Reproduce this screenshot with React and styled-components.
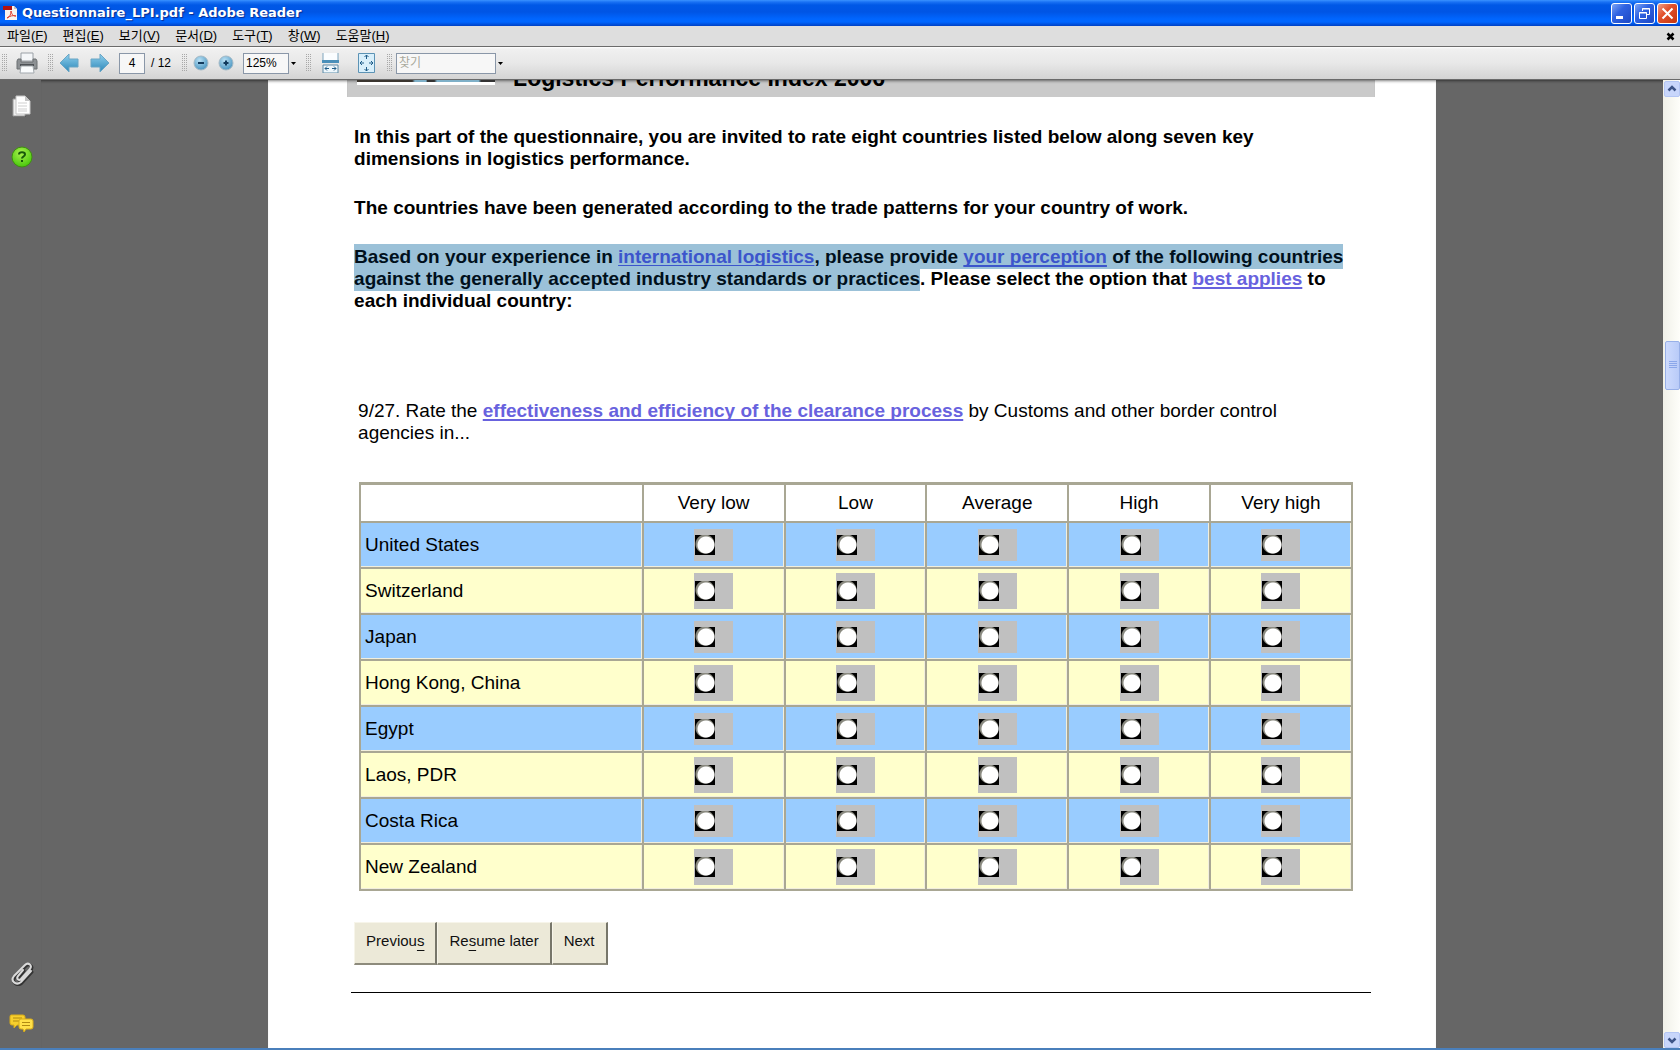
import React from 'react';
import styled, { createGlobalStyle } from 'styled-components';

const uiFont = `'Liberation Sans', 'Noto Sans CJK KR', sans-serif`;
const docFont = `'Liberation Sans', sans-serif`;

const GlobalStyle = createGlobalStyle`
    * {
        box-sizing: border-box;
    }
    body {
        margin: 0;
        overflow: hidden;
        background: #666666;
    }
`
const Window = styled.div`
    display: flex;
    flex-direction: column;
    height: 100vh;
    border-bottom: 2px solid #4a7fbb;
    font-family: ${uiFont};
    font-size: 12px;
    color: #000000;
`
const TitleBar = styled.header`
    display: flex;
    flex: none;
    align-items: center;
    height: 26px;
    padding: 0 2px 0 3px;
    background: linear-gradient(#3a93ff 0, #1a72f4 2px, #0058e6 5px, #0055e5 12px, #0066ff 19px, #0066ff 22px, #0041c4 26px);
`
const Title = styled.h1`
    flex: 1;
    margin: 0 0 0 4px;
    font-family: 'DejaVu Sans', sans-serif;
    font-size: 13px;
    font-weight: bold;
    line-height: 24px;
    color: #ffffff;
    text-shadow: 1px 1px 1px #0a2a8c;
`
const WindowButton = styled.button`
    display: flex;
    width: 21px;
    height: 21px;
    margin-left: 2px;
    padding: 0;
    border: 1px solid #ffffff;
    border-radius: 3px;
    background: ${({ $close }) => ($close
        ? 'linear-gradient(135deg, #f0a088, #e2512c 40%, #c5350e)'
        : 'linear-gradient(135deg, #7da5f5, #2f63e2 40%, #1d48c4)')};
`
const MenuBar = styled.nav`
    display: flex;
    flex: none;
    align-items: center;
    height: 20px;
    padding: 0 5px 0 7px;
    background: #dedede;
`
const MenuItem = styled.button`
    margin-right: 15px;
    padding: 0;
    border: none;
    background: none;
    font: 13px/18px ${uiFont};
    color: #000000;
`
const CloseDocument = styled.button`
    display: flex;
    margin-left: auto;
    padding: 0;
    border: none;
    background: none;
`
const ToolBar = styled.div`
    display: flex;
    flex: none;
    align-items: center;
    height: 34px;
    border-top: 1px solid #6b6b6b;
    border-bottom: 1px solid #6b6b6b;
    background: linear-gradient(#ffffff 0, #f0f0f0 2px, #e8e8e8 50%, #d4d4d4);
`
const Grip = styled.span`
    width: 5px;
    height: 18px;
    margin: 0 ${({ $after }) => $after}px 0 ${({ $before }) => $before}px;
    background: repeating-linear-gradient(#a8a8a8 0 1px, transparent 1px 2px);
    -webkit-mask: repeating-linear-gradient(90deg, #000 0 1px, transparent 1px 2px);
`
const ToolButton = styled.button`
    display: flex;
    margin-right: ${({ $gap }) => $gap}px;
    padding: 0;
    border: none;
    background: none;
`
const ToolInput = styled.input`
    width: ${({ $width }) => $width}px;
    height: 21px;
    padding: 0 2px;
    border: 1px solid #8a97a8;
    background: #f7f7f7;
    font: 12px ${uiFont};
    text-align: ${({ $align }) => $align || 'left'};
    color: #000000;

    &::placeholder {
        color: #a9a99c;
        opacity: 1;
    }
`
const PageCount = styled.span`
    margin: 0 11px 0 6px;
`
const DropButton = styled.button`
    display: flex;
    padding: 0 2px;
    border: none;
    background: none;
`
const Workspace = styled.div`
    display: flex;
    flex: 1;
    min-height: 0;
    background: #666666;
`
const Sidebar = styled.aside`
    display: flex;
    flex: none;
    flex-direction: column;
    align-items: center;
    gap: 28px;
    width: 41px;
    padding: 15px 0 15px 2px;
`
const SidebarButton = styled.button`
    display: flex;
    padding: 0;
    border: none;
    background: none;
`
const Spacer = styled.div`
    flex: 1;
`
const Viewer = styled.main`
    flex: 1;
    min-width: 0;
    overflow: hidden;
    box-shadow: inset 0 3px 3px -2px rgba(0, 0, 0, 0.5);
`
const Page = styled.article`
    width: 72%;
    min-height: 100%;
    margin: 0 auto;
    padding: 0 61px 0 79px;
    background: #ffffff;
    box-shadow: inset 0 3px 3px -2px rgba(0, 0, 0, 0.5);
    font-family: ${docFont};
    font-size: 19px;
    line-height: 22px;
`
const Banner = styled.header`
    display: flex;
    align-items: flex-start;
    height: 17px;
    padding-left: 10px;
    overflow: hidden;
    background: #cacaca;
    box-shadow: inset 0 3px 3px -2px rgba(0, 0, 0, 0.5);
`
const BannerLogo = styled.span`
    width: 138px;
    height: 5px;
    margin-right: 18px;
    border-bottom: 3px solid #ffffff;
    background: linear-gradient(90deg, #3b352f 0 40%, #7fb0c8 42% 50%, #333333 51% 56%, #7fb0c8 58% 88%, #333333 90%);
`
const BannerTitle = styled.h2`
    margin: -13px 0 0;
    font-size: 23px;
    line-height: 22px;
`
const Intro = styled.section`
    padding: 29px 22px 0 7px;
    font-weight: bold;
`
const Paragraph = styled.p`
    margin: 0 0 27px;
`
const Selected = styled.mark`
    padding: 2px 0;
    background: #9bc1d8;
    color: #00101c;
`
const Term = styled.a`
    color: ${({ $selected }) => ($selected ? '#3c55cc' : '#6862de')};
    font-weight: bold;
    text-decoration: underline;
    text-decoration-thickness: 2px;
    text-underline-offset: 2px;
    text-decoration-skip-ink: none;
`
const Question = styled.p`
    margin: 88px 22px 38px 11px;
`
const RatingTable = styled.table`
    width: calc(100% - 34px);
    margin-left: 12px;
    border-collapse: collapse;
    table-layout: fixed;
    border: 2px solid #a9a794;
    border-top-width: 3px;
`
const HeaderCell = styled.th`
    width: ${({ $first }) => ($first ? '28.5%' : '14.3%')};
    height: 38px;
    padding: 0;
    border: 2px solid #a9a794;
    background: #ffffff;
    font-weight: normal;
`
const Row = styled.tr`
    height: 46px;
    background: ${({ $odd }) => ($odd ? '#99ccff' : '#ffffcc')};
`
const cellBorder = `
    padding: 0;
    border: 2px solid #a9a794;
    box-shadow: inset -1px -1px 0 #f1eedd;
`
const CountryCell = styled.th`
    ${cellBorder}
    padding-left: 4px;
    font-weight: normal;
    text-align: left;
`
const RatingCell = styled.td`
    ${cellBorder}
`
const RadioBox = styled.label`
    display: flex;
    align-items: center;
    width: 39px;
    height: ${({ $odd }) => ($odd ? 32 : 36)}px;
    margin: 0 auto;
    padding-left: 1px;
    background: #c0c0c0;
`
const Radio = styled.input`
    appearance: none;
    width: 20px;
    height: 20px;
    margin: 0;
    background:
        radial-gradient(circle at 11px 10px, #ffffff 8px, transparent 9px),
        radial-gradient(circle at 10px 9px, #8a8a80 9px, #000000 10px);
`
const ButtonBar = styled.div`
    display: flex;
    margin: 31px 0 0 7px;
`
const FormButton = styled.button`
    height: 43px;
    padding: 0 11px 4px;
    border: solid;
    border-width: 1px 2px 2px 1px;
    border-color: #f7f5ea #77766a #8d8b7c #f7f5ea;
    background: #ece9d8;
    font: 15px ${docFont};
    color: #111111;
`
const AccessKey = styled.span`
    text-decoration: underline;
    text-underline-offset: 4px;
`
const Divider = styled.hr`
    height: 1px;
    margin: 27px 4px 0;
    border: none;
    background: #000000;
`
const ScrollBar = styled.div`
    display: flex;
    flex: none;
    flex-direction: column;
    width: 17px;
    padding: 1px 0 0 1px;
    background: linear-gradient(90deg, #f0f0e8, #fefefa);
`
const ScrollButton = styled.button`
    display: flex;
    width: 16px;
    height: 16px;
    padding: 0;
    border: 1px solid #b4c6f4;
    border-radius: 2px;
    background: #c8d6fb;
`
const ScrollGap = styled.div`
    flex: ${({ $share }) => $share};
`
const ScrollThumb = styled.div`
    display: flex;
    flex: none;
    align-items: center;
    justify-content: center;
    height: 49px;
    margin-left: 1px;
    border: 1px solid #98b0e8;
    border-radius: 2px;
    background: linear-gradient(90deg, #cddafd, #b9cbf8);
`

const menus = [
    ['파일', 'F'],
    ['편집', 'E'],
    ['보기', 'V'],
    ['문서', 'D'],
    ['도구', 'T'],
    ['창', 'W'],
    ['도움말', 'H']
];
const ratings = ['Very low', 'Low', 'Average', 'High', 'Very high'];
const countries = [
    'United States',
    'Switzerland',
    'Japan',
    'Hong Kong, China',
    'Egypt',
    'Laos, PDR',
    'Costa Rica',
    'New Zealand'
];

const ReaderIcon = () => (
    <svg width="15" height="16" viewBox="0 0 15 16" aria-hidden="true">
        <path d="M2 1h9l3 3v11H2z" fill="#f8f4f0" />
        <path d="M11 1v3h3z" fill="#c9c0bc" />
        <path d="M0 1h9v4H0z" fill="#b31212" />
        <path d="M4 13c3-1 4-4 4-7 1 4 2 5 5 5-3-1-6 0-9 2z" fill="none" stroke="#e03a2a" />
    </svg>
)
const MinimizeIcon = () => (
    <svg width="19" height="19" viewBox="0 0 19 19"><path d="M4 12h7v3H4z" fill="#fff" /></svg>
)
const RestoreIcon = () => (
    <svg width="19" height="19" viewBox="0 0 19 19" fill="none" stroke="#fff">
        <path d="M7.500 7V4.500h7v6H12" />
        <path d="M7 5h8" />
        <path d="M4.500 8.500h7v6h-7zM4 9h8" />
    </svg>
)
const CloseIcon = () => (
    <svg width="19" height="19" viewBox="0 0 19 19"><path d="M4.500 4.500l10 10M14.500 4.500l-10 10" stroke="#fff" strokeWidth="2" /></svg>
)
const SmallCloseIcon = () => (
    <svg width="9" height="9" viewBox="0 0 9 9"><path d="M1.500 1.500l6 6M7.500 1.500l-6 6" stroke="#000" strokeWidth="2.500" /></svg>
)
const PrinterIcon = () => (
    <svg width="24" height="24" viewBox="0 0 24 24">
        <path d="M6 2h12v8H6z" fill="#f4f6f8" stroke="#9aa0a6" />
        <path d="M3 8h3v3h12V8h3l1 2v8H2v-8z" fill="#8d9194" stroke="#6c7073" />
        <path d="M5 13h14v2H5z" fill="#4e5255" />
        <path d="M6 15h12l1 7H5z" fill="#fafcfd" stroke="#a3a9ae" />
    </svg>
)
const ArrowIcon = ({ right }) => (
    <svg width="20" height="22" viewBox="0 0 20 22">
        <defs>
            <linearGradient id="arrow" x1="0" y1="0" x2="0" y2="1">
                <stop offset="0" stopColor="#8fd0ee" />
                <stop offset="1" stopColor="#2d87b8" />
            </linearGradient>
        </defs>
        <path
            d={right ? 'M19 11L10 2v5H1v8h9v5z' : 'M1 11l9-9v5h9v8h-9v5z'}
            fill="url(#arrow)"
            stroke="#6aa6c5"
        />
    </svg>
)
const ZoomIcon = ({ plus }) => (
    <svg width="16" height="16" viewBox="0 0 16 16">
        <defs>
            <radialGradient id="ball" cx="0.4" cy="0.3" r="0.8">
                <stop offset="0" stopColor="#b9e0f4" />
                <stop offset="1" stopColor="#3d8cba" />
            </radialGradient>
        </defs>
        <circle cx="8" cy="8" r="7" fill="url(#ball)" stroke="#a4b9c6" />
        <path d={plus ? 'M5.500 8h5M8 5.500v5' : 'M5 8h6'} stroke="#123a5c" strokeWidth="2" />
    </svg>
)
const DropIcon = () => (
    <svg width="5" height="3" viewBox="0 0 5 3"><path d="M0 0h5L2.500 3z" fill="#000" /></svg>
)
const FitWidthIcon = () => (
    <svg width="17" height="20" viewBox="0 0 17 20">
        <path d="M1 0v8h15V0" fill="#fafdff" stroke="#7fa5bd" />
        <path d="M0 7h17v3H0z" fill="#4a8fb9" />
        <path d="M1 12h15v8H1z" fill="#eef7fc" stroke="#5c8aa6" />
        <path d="M3 15.500h4M10 15.500h4M5 13.500l-2 2 2 2M12 13.500l2 2-2 2" fill="none" stroke="#1f5c88" />
    </svg>
)
const FitPageIcon = () => (
    <svg width="17" height="20" viewBox="0 0 17 20">
        <path d="M.5.500h16v19H.5z" fill="#d8effb" stroke="#5c93b5" />
        <path
            d="M8.500 2v4M6.500 4l2-2 2 2M8.500 18v-4M6.500 16l2 2 2-2M2 10h4M4 8l-2 2 2 2M15 10h-4M13 8l2 2-2 2"
            fill="none"
            stroke="#1f5c88"
        />
    </svg>
)
const PagesIcon = () => (
    <svg width="20" height="23" viewBox="0 0 20 23">
        <path d="M2 5h12v17H2z" fill="#444" opacity="0.5" />
        <path d="M1 4h12v17H1z" fill="#efefef" stroke="#9a9a9a" />
        <path d="M4 1h9l5 5v13H4z" fill="#fff" stroke="#c4c4c4" />
        <path d="M13 1v5h5z" fill="#c4c4c4" />
        <path d="M6 8h9M6 11h9M6 14h9M6 16h9" stroke="#cfcfcf" />
    </svg>
)
const HelpIcon = () => (
    <svg width="22" height="22" viewBox="0 0 22 22">
        <defs>
            <radialGradient id="help" cx="0.45" cy="0.3" r="0.7">
                <stop offset="0" stopColor="#a8f04c" />
                <stop offset="1" stopColor="#48c80c" />
            </radialGradient>
        </defs>
        <circle cx="11" cy="11" r="10" fill="url(#help)" stroke="#3f8f10" />
        <path d="M8 8.500c0-3 6-3 6 0 0 2-3 2-3 4" fill="none" stroke="#17590a" strokeWidth="2" />
        <path d="M10 14h2v2h-2z" fill="#17590a" />
    </svg>
)
const ClipIcon = () => (
    <svg width="24" height="24" viewBox="0 0 24 24" fill="none" strokeLinecap="round">
        <path d="M13 8l-5 6c-2 3 1 5 3 3l9-10c3-4-2-7-5-4L4 14c-4 5 2 10 7 6l10-11" transform="translate(1 1)" stroke="#333" strokeWidth="3" />
        <path d="M13 8l-5 6c-2 3 1 5 3 3l9-10c3-4-2-7-5-4L4 14c-4 5 2 10 7 6l10-11" stroke="#dadada" strokeWidth="2" />
    </svg>
)
const CommentsIcon = () => (
    <svg width="25" height="19" viewBox="0 0 25 19">
        <path d="M2 1h12q2 0 2 2v6q0 2-2 2H8l-3 3v-3H3q-2 0-2-2V3q0-2 1-2z" fill="#f7cf2d" stroke="#d8ac18" />
        <path d="M4 4h9M4 7h6" stroke="#b08a12" />
        <path d="M12 5h10q2 0 2 2v6q0 2-2 2h-5l-2 3-1-3h-2q-2 0-2-2V7q0-2 2-2z" fill="#ffe04a" stroke="#d8ac18" />
        <path d="M13 8.500h8M13 11.500h8" stroke="#b08a12" />
    </svg>
)
const ChevronIcon = ({ down }) => (
    <svg width="14" height="14" viewBox="0 0 14 14">
        <path d={down ? 'M3.500 5.500L7 9l3.500-3.500' : 'M3.500 8.500L7 5l3.500 3.500'} fill="none" stroke="#3d5488" strokeWidth="2.500" />
    </svg>
)
const ThumbLines = () => (
    <svg width="8" height="8" viewBox="0 0 8 8"><path d="M0 .5h8M0 2.500h8M0 4.500h8M0 6.500h8" stroke="#8ba7ea" /></svg>
)

const RatingRow = ({ country, odd }) => (
    <Row $odd={odd}>
        <CountryCell scope="row">{country}</CountryCell>
        {ratings.map(rating => (
            <RatingCell key={rating}>
                <RadioBox $odd={odd}>
                    <Radio type="radio" name={country} value={rating} aria-label={`${country}: ${rating}`} />
                </RadioBox>
            </RatingCell>
        ))}
    </Row>
)

const App = () => {
    return (
        <Window>
            <GlobalStyle />
            <TitleBar>
                <ReaderIcon />
                <Title>Questionnaire_LPI.pdf - Adobe Reader</Title>
                <WindowButton aria-label="Minimize"><MinimizeIcon /></WindowButton>
                <WindowButton aria-label="Restore"><RestoreIcon /></WindowButton>
                <WindowButton $close aria-label="Close"><CloseIcon /></WindowButton>
            </TitleBar>
            <MenuBar>
                {menus.map(([name, key]) => (
                    <MenuItem key={key}>{name}(<u>{key}</u>)</MenuItem>
                ))}
                <CloseDocument aria-label="Close document"><SmallCloseIcon /></CloseDocument>
            </MenuBar>
            <ToolBar>
                <Grip $before={2} $after={8} />
                <ToolButton $gap={9} aria-label="Print"><PrinterIcon /></ToolButton>
                <Grip $before={0} $after={6} />
                <ToolButton $gap={11} aria-label="Previous page"><ArrowIcon /></ToolButton>
                <ToolButton $gap={9} aria-label="Next page"><ArrowIcon right /></ToolButton>
                <ToolInput $width={26} $align="center" defaultValue="4" aria-label="Page" />
                <PageCount>/ 12</PageCount>
                <Grip $before={0} $after={6} />
                <ToolButton $gap={9} aria-label="Zoom out"><ZoomIcon /></ToolButton>
                <ToolButton $gap={9} aria-label="Zoom in"><ZoomIcon plus /></ToolButton>
                <ToolInput $width={46} defaultValue="125%" aria-label="Zoom" />
                <DropButton aria-label="Zoom levels"><DropIcon /></DropButton>
                <Grip $before={8} $after={11} />
                <ToolButton $gap={19} aria-label="Fit width"><FitWidthIcon /></ToolButton>
                <ToolButton $gap={12} aria-label="Fit page"><FitPageIcon /></ToolButton>
                <Grip $before={0} $after={4} />
                <ToolInput $width={100} placeholder="찾기" aria-label="찾기" />
                <DropButton aria-label="Find options"><DropIcon /></DropButton>
            </ToolBar>
            <Workspace>
                <Sidebar>
                    <SidebarButton aria-label="Pages"><PagesIcon /></SidebarButton>
                    <SidebarButton aria-label="Help"><HelpIcon /></SidebarButton>
                    <Spacer />
                    <SidebarButton aria-label="Attachments"><ClipIcon /></SidebarButton>
                    <SidebarButton aria-label="Comments"><CommentsIcon /></SidebarButton>
                </Sidebar>
                <Viewer>
                    <Page>
                        <Banner>
                            <BannerLogo />
                            <BannerTitle>Logistics Performance Index 2006</BannerTitle>
                        </Banner>
                        <Intro>
                            <Paragraph>
                                In this part of the questionnaire, you are invited to rate eight countries listed below
                                along seven key dimensions in logistics performance.
                            </Paragraph>
                            <Paragraph>
                                The countries have been generated according to the trade patterns for your country of work.
                            </Paragraph>
                            <Paragraph>
                                <Selected>
                                    Based on your experience in <Term $selected href="#logistics">international logistics</Term>,
                                    please provide <Term $selected href="#perception">your perception</Term> of the following
                                    countries against the generally accepted industry standards or practices
                                </Selected>
                                . Please select the option that <Term href="#applies">best applies</Term> to each individual
                                country:
                            </Paragraph>
                        </Intro>
                        <Question>
                            9/27. Rate the{' '}
                            <Term href="#clearance">effectiveness and efficiency of the clearance process</Term> by Customs
                            and other border control agencies in...
                        </Question>
                        <RatingTable>
                            <thead>
                                <tr>
                                    <HeaderCell $first />
                                    {ratings.map(rating => (
                                        <HeaderCell key={rating} scope="col">{rating}</HeaderCell>
                                    ))}
                                </tr>
                            </thead>
                            <tbody>
                                {countries.map((country, i) => (
                                    <RatingRow key={country} country={country} odd={i % 2 === 0} />
                                ))}
                            </tbody>
                        </RatingTable>
                        <ButtonBar>
                            <FormButton>Previou<AccessKey>s</AccessKey></FormButton>
                            <FormButton>Re<AccessKey>s</AccessKey>ume later</FormButton>
                            <FormButton>Next</FormButton>
                        </ButtonBar>
                        <Divider />
                    </Page>
                </Viewer>
                <ScrollBar>
                    <ScrollButton aria-label="Scroll up"><ChevronIcon /></ScrollButton>
                    <ScrollGap $share={244} />
                    <ScrollThumb><ThumbLines /></ScrollThumb>
                    <ScrollGap $share={643} />
                    <ScrollButton aria-label="Scroll down"><ChevronIcon down /></ScrollButton>
                </ScrollBar>
            </Workspace>
        </Window>
    )
}

export default App;
